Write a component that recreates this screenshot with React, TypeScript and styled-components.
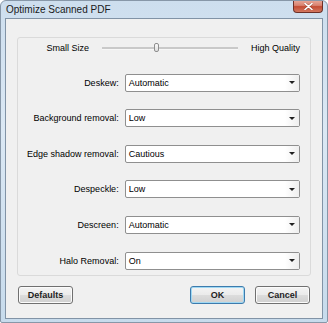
import styled, { createGlobalStyle } from 'styled-components'

const GlobalStyle = createGlobalStyle`
  html, body {
    margin: 0;
    padding: 0;
    background: #ffffff;
  }
  body {
    font-family: "Liberation Sans", Arial, sans-serif;
    font-size: 9px;
    color: #000;
  }
`;

const Window = styled.div`
  width: 328px;
  height: 323px;
  box-sizing: border-box;
  display: flex;
  flex-direction: column;
  border: 1px solid #8797a8;
  border-radius: 6px 6px 2px 2px;
  background: linear-gradient(180deg, #cddeee 0%, #dbe8f4 40%, #c7dbec 100%);
  overflow: hidden;
`;

const TitleBar = styled.div`
  height: 17px;
  flex: none;
  display: flex;
  justify-content: space-between;
  align-items: flex-start;
  padding-left: 5px;
  padding-right: 4px;
`;

const Title = styled.div`
  line-height: 17px;
  font-size: 10px;
  color: #1a1a1a;
`;

const CloseButton = styled.div`
  width: 30px;
  height: 13px;
  margin-top: -1px;
  box-sizing: border-box;
  border: 1px solid #6d3027;
  border-top: none;
  border-radius: 0 0 4px 4px;
  background: linear-gradient(180deg, #e9ab9c 0%, #d98370 45%, #c44c33 55%, #d37860 100%);
  display: flex;
  align-items: center;
  justify-content: center;
`;

const Client = styled.div`
  flex: 1;
  margin: 0 4px 4px 4px;
  border: 1px solid #8193a6;
  background: #f0f0f0;
  display: flex;
  flex-direction: column;
  padding: 18px 11px 14px 11px;
  box-sizing: border-box;
`;

const Group = styled.div`
  border: 1px solid #dadada;
  border-radius: 3px;
  padding: 2px 10px 5px 4px;
  display: flex;
  flex-direction: column;
  gap: 17.6px;
`;

const SliderRow = styled.div`
  height: 16px;
  display: flex;
  align-items: center;
`;

const SliderLabel = styled.div<{ $align: 'left' | 'right' }>`
  width: ${p => (p.$align === 'right' ? '67px' : '49px')};
  text-align: ${p => p.$align};
  white-space: nowrap;
`;

const Track = styled.div`
  position: relative;
  width: 136px;
  height: 2px;
  margin: 0 13px;
  background: #c9c9c9;
  border-bottom: 1px solid #f7f7f7;
`;

const Thumb = styled.div`
  position: absolute;
  left: 52px;
  top: -4px;
  width: 5px;
  height: 9px;
  box-sizing: border-box;
  border: 1px solid #8e8e8e;
  border-radius: 2px;
  background: linear-gradient(180deg, #fafafa, #dedede);
`;

const Row = styled.div`
  display: flex;
  align-items: center;
  height: 18px;
`;

const Label = styled.div`
  width: 97px;
  text-align: right;
  white-space: nowrap;
  margin-right: 6px;
`;

const Combo = styled.div`
  width: 176px;
  height: 18px;
  box-sizing: border-box;
  border: 1px solid #8f8f8f;
  border-radius: 2px;
  background: #fff;
  display: flex;
  align-items: center;
  padding-left: 3px;
`;

const ComboText = styled.div`
  flex: 1;
`;

const Arrow = styled.div`
  width: 14px;
  height: 16px;
  display: flex;
  align-items: center;
  justify-content: center;
  background: linear-gradient(90deg, #ffffff, #eeeeee);

  &::after {
    content: '';
    border-left: 3px solid transparent;
    border-right: 3px solid transparent;
    border-top: 3px solid #202020;
  }
`;

const ButtonRow = styled.div`
  display: flex;
  margin-top: 10px;
  margin-left: 1px;
  margin-right: 1px;
`;

const Button = styled.div<{ $default?: boolean }>`
  width: 55px;
  height: 18px;
  box-sizing: border-box;
  border: 1px solid ${p => (p.$default ? '#3d7bad' : '#707070')};
  border-radius: 3px;
  background: linear-gradient(180deg, #f4f4f4 0%, #ebebeb 48%, #dcdcdc 52%, #d0d0d0 100%);
  box-shadow: inset 0 0 0 1px ${p => (p.$default ? '#9fd8f3' : '#fbfbfb')};
  display: flex;
  align-items: center;
  justify-content: center;
  font-weight: bold;
  color: #1e1e1e;

  & + & {
    margin-left: 10px;
  }
`;

const Spacer = styled.div`
  flex: 1;
`;

const options: [string, string][] = [
  ['Deskew:', 'Automatic'],
  ['Background removal:', 'Low'],
  ['Edge shadow removal:', 'Cautious'],
  ['Despeckle:', 'Low'],
  ['Descreen:', 'Automatic'],
  ['Halo Removal:', 'On'],
];

export default function App(): JSX.Element {
  return (
    <>
      <GlobalStyle />
      <Window>
        <TitleBar>
          <Title>Optimize Scanned PDF</Title>
          <CloseButton>
            <svg width='9' height='7' viewBox='0 0 9 7'>
              <path d='M1 0.5 L8 6.5 M8 0.5 L1 6.5' stroke='#4a1a12' strokeWidth='2.6' strokeLinecap='round' opacity='0.35' />
              <path d='M1 0.5 L8 6.5 M8 0.5 L1 6.5' stroke='#ffffff' strokeWidth='1.6' strokeLinecap='round' />
            </svg>
          </CloseButton>
        </TitleBar>
        <Client>
          <Group>
            <SliderRow>
              <SliderLabel $align='right'>Small Size</SliderLabel>
              <Track><Thumb /></Track>
              <SliderLabel $align='left'>High Quality</SliderLabel>
            </SliderRow>
            {options.map(([label, value]) => (
              <Row key={label}>
                <Label>{label}</Label>
                <Combo>
                  <ComboText>{value}</ComboText>
                  <Arrow />
                </Combo>
              </Row>
            ))}
          </Group>
          <ButtonRow>
            <Button>Defaults</Button>
            <Spacer />
            <Button $default>OK</Button>
            <Button>Cancel</Button>
          </ButtonRow>
        </Client>
      </Window>
    </>
  )
}
